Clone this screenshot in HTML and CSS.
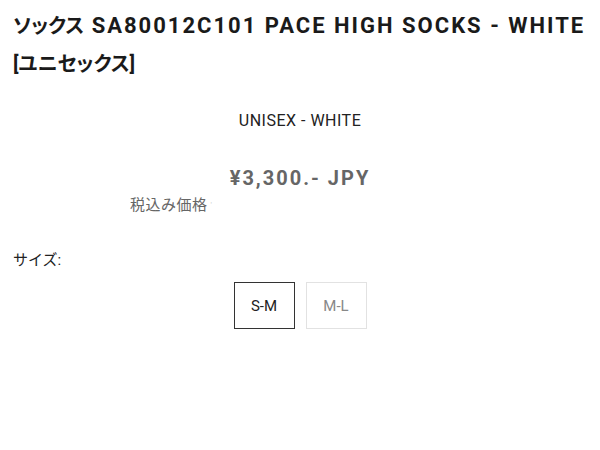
FILE: index.html
```html
<!DOCTYPE html>
<html lang="ja">
<head>
<meta charset="utf-8">
<link rel="stylesheet" href="styles.css">
</head>
<body>
<div class="page">
  <h1 class="title"><span class="ja">ソックス</span> SA80012C101 PACE HIGH SOCKS - WHITE <span class="ja">[ユニセックス]</span></h1>
  <p class="variant">UNISEX - WHITE</p>
  <p class="price">¥3,300.- JPY</p>
  <p class="tax">税込み価格<span class="tick">'</span></p>
  <p class="size-label">サイズ:</p>
  <div class="sizes">
    <div class="size selected">S-M</div>
    <div class="size">M-L</div>
  </div>
</div>
</body>
</html>
```
FILE: styles.css
```css
html, body {
  margin: 0;
  padding: 0;
  background: #fff;
}
body {
  font-family: Roboto, "Noto Sans CJK JP", sans-serif;
  color: #222;
}
.page {
  padding: 7px 13px 0;
}
.title {
  margin: 0;
  font-size: 22px;
  font-weight: 700;
  line-height: 37px;
  letter-spacing: 2px;
  color: #1a1a1a;
}
.title .ja {
  font-size: 20px;
  letter-spacing: 0;
  font-feature-settings: "palt";
}
.variant {
  margin: 28px 0 0;
  text-align: center;
  font-size: 16px;
  line-height: 20px;
  letter-spacing: 0.5px;
  color: #222;
}
.price {
  margin: 35px 0 0;
  text-align: center;
  font-size: 20px;
  font-weight: 700;
  line-height: 24px;
  letter-spacing: 2px;
  color: #666;
}
.tax {
  margin: 5px 0 0 117px;
  font-size: 15px;
  line-height: 20px;
  letter-spacing: 0.5px;
  color: #666;
}
.tick {
  color: #ccc;
  font-size: 8px;
  vertical-align: top;
  margin-left: 3px;
}
.size-label {
  margin: 35px 0 0;
  font-size: 15px;
  line-height: 20px;
  color: #222;
}
.sizes {
  display: flex;
  justify-content: center;
  gap: 11px;
  margin-top: 12px;
}
.size {
  width: 59px;
  height: 45px;
  border: 1px solid #e2e2e2;
  display: flex;
  align-items: center;
  justify-content: center;
  font-size: 15px;
  color: #888;
}
.size.selected {
  border-color: #333;
  color: #222;
}
```
